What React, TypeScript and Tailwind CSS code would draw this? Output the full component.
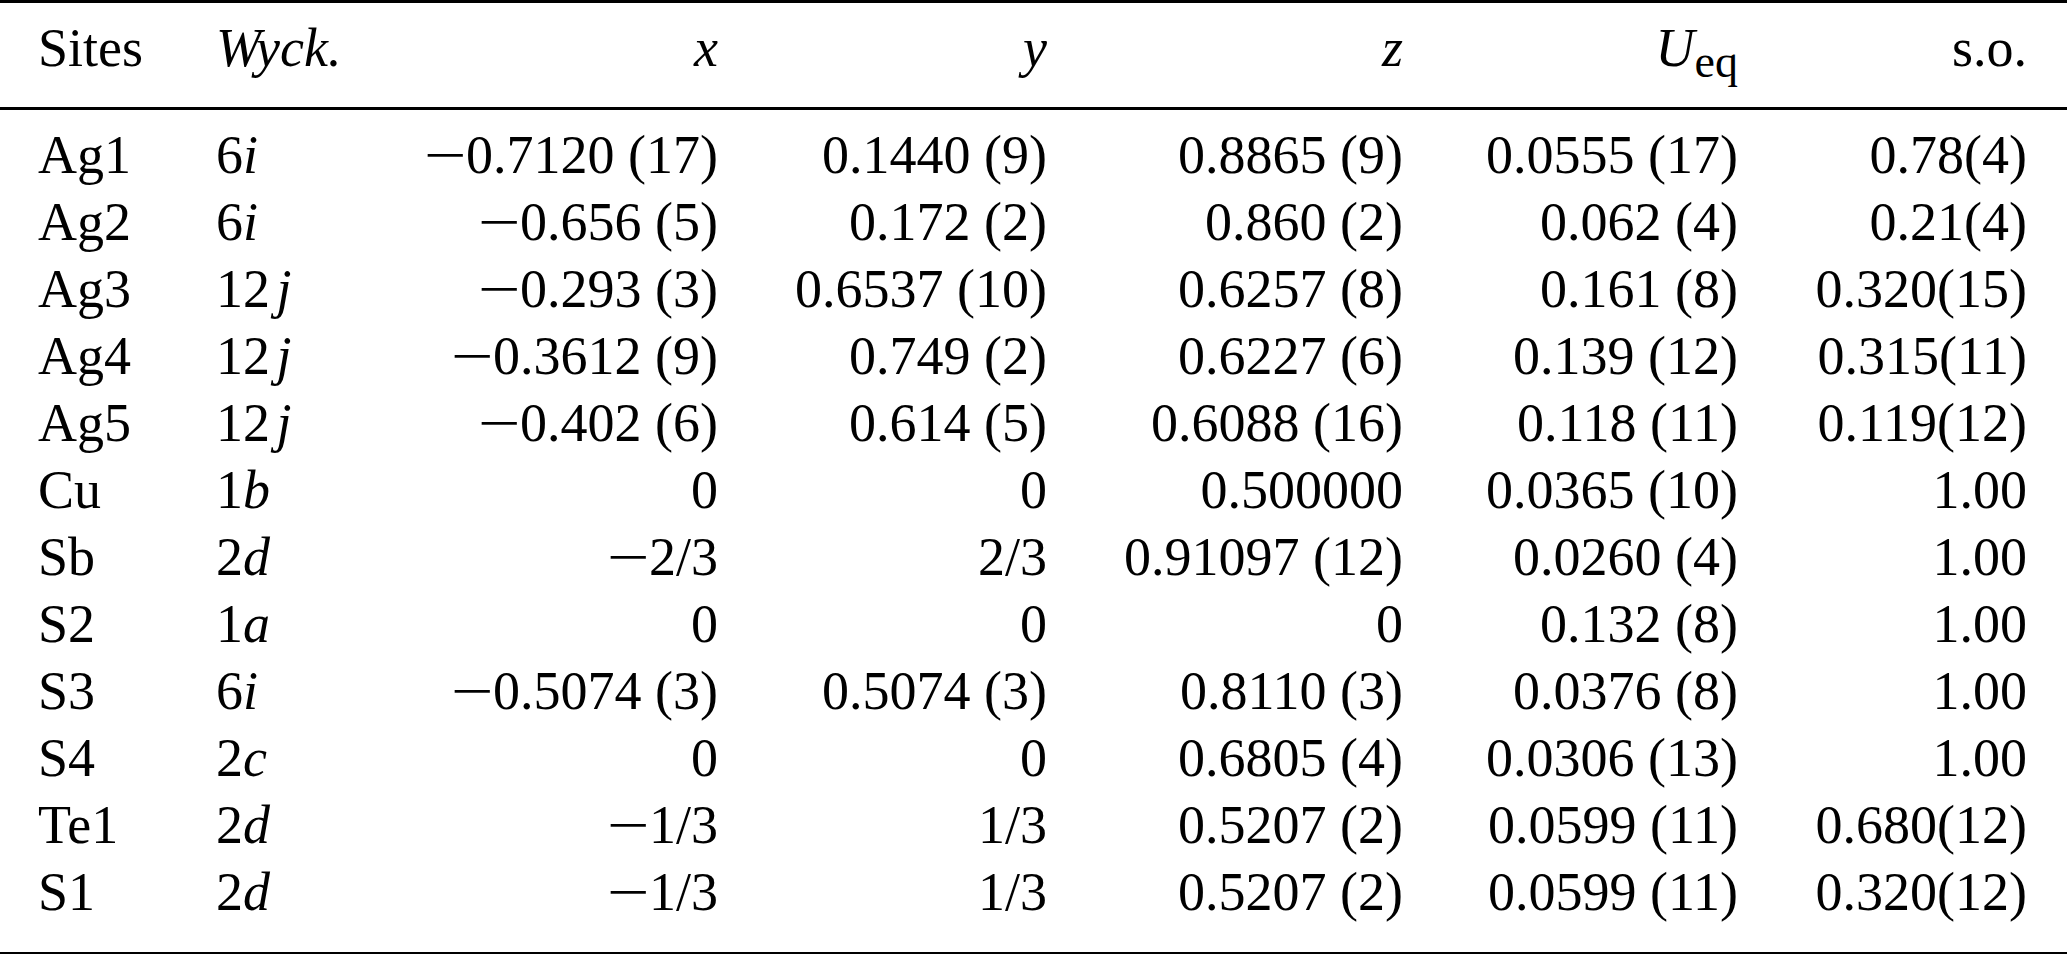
import React from 'react'

type Row = {
  site: string
  num: string
  letter: string
  x: string
  y: string
  z: string
  u: string
  so: string
}

const rows: Row[] = [
  { site: 'Ag1', num: '6', letter: 'i', x: '−0.7120 (17)', y: '0.1440 (9)', z: '0.8865 (9)', u: '0.0555 (17)', so: '0.78(4)' },
  { site: 'Ag2', num: '6', letter: 'i', x: '−0.656 (5)', y: '0.172 (2)', z: '0.860 (2)', u: '0.062 (4)', so: '0.21(4)' },
  { site: 'Ag3', num: '12', letter: 'j', x: '−0.293 (3)', y: '0.6537 (10)', z: '0.6257 (8)', u: '0.161 (8)', so: '0.320(15)' },
  { site: 'Ag4', num: '12', letter: 'j', x: '−0.3612 (9)', y: '0.749 (2)', z: '0.6227 (6)', u: '0.139 (12)', so: '0.315(11)' },
  { site: 'Ag5', num: '12', letter: 'j', x: '−0.402 (6)', y: '0.614 (5)', z: '0.6088 (16)', u: '0.118 (11)', so: '0.119(12)' },
  { site: 'Cu', num: '1', letter: 'b', x: '0', y: '0', z: '0.500000', u: '0.0365 (10)', so: '1.00' },
  { site: 'Sb', num: '2', letter: 'd', x: '−2/3', y: '2/3', z: '0.91097 (12)', u: '0.0260 (4)', so: '1.00' },
  { site: 'S2', num: '1', letter: 'a', x: '0', y: '0', z: '0', u: '0.132 (8)', so: '1.00' },
  { site: 'S3', num: '6', letter: 'i', x: '−0.5074 (3)', y: '0.5074 (3)', z: '0.8110 (3)', u: '0.0376 (8)', so: '1.00' },
  { site: 'S4', num: '2', letter: 'c', x: '0', y: '0', z: '0.6805 (4)', u: '0.0306 (13)', so: '1.00' },
  { site: 'Te1', num: '2', letter: 'd', x: '−1/3', y: '1/3', z: '0.5207 (2)', u: '0.0599 (11)', so: '0.680(12)' },
  { site: 'S1', num: '2', letter: 'd', x: '−1/3', y: '1/3', z: '0.5207 (2)', u: '0.0599 (11)', so: '0.320(12)' },
]

// the minus in the source is the wide TeX one, stretch ours a bit
function Num({ value }: { value: string }) {
  if (value.startsWith('−')) {
    return (
      <span>
        <span className="inline-block origin-right scale-x-[1.4]">−</span>
        {value.slice(1)}
      </span>
    )
  }
  return <span>{value}</span>
}

const cols =
  'grid grid-cols-[178px_200px_302px_329px_356px_335px_289px] pl-[38px] pr-[40px]'

export default function App() {
  return (
    <div className="h-[954px] w-[2067px] bg-white font-['Liberation_Serif','Times_New_Roman',serif] text-[54px] leading-[67px] text-black">
      <div className="border-t-[3px] border-black" />

      <div className={`${cols} pb-[23px] pt-[12px]`}>
        <div>Sites</div>
        <div className="italic">Wyck.</div>
        <div className="text-right italic">x</div>
        <div className="text-right italic">y</div>
        <div className="text-right italic">z</div>
        <div className="text-right">
          <span className="italic">U</span>
          <span className="relative top-[11px] text-[46px]">eq</span>
        </div>
        <div className="text-right">s.o.</div>
      </div>

      <div className="border-t-[3px] border-black" />

      <div className="pb-[26px] pt-[12px]">
        {rows.map((row) => (
          <div key={row.site} className={cols}>
            <div>{row.site}</div>
            <div>
              {row.num}
              <span className={row.letter === 'j' ? 'ml-[0.12em] italic' : 'italic'}>
                {row.letter}
              </span>
            </div>
            <div className="text-right">
              <Num value={row.x} />
            </div>
            <div className="text-right">
              <Num value={row.y} />
            </div>
            <div className="text-right">{row.z}</div>
            <div className="text-right">{row.u}</div>
            <div className="text-right">{row.so}</div>
          </div>
        ))}
      </div>

      <div className="border-t-[3px] border-black" />
    </div>
  )
}
